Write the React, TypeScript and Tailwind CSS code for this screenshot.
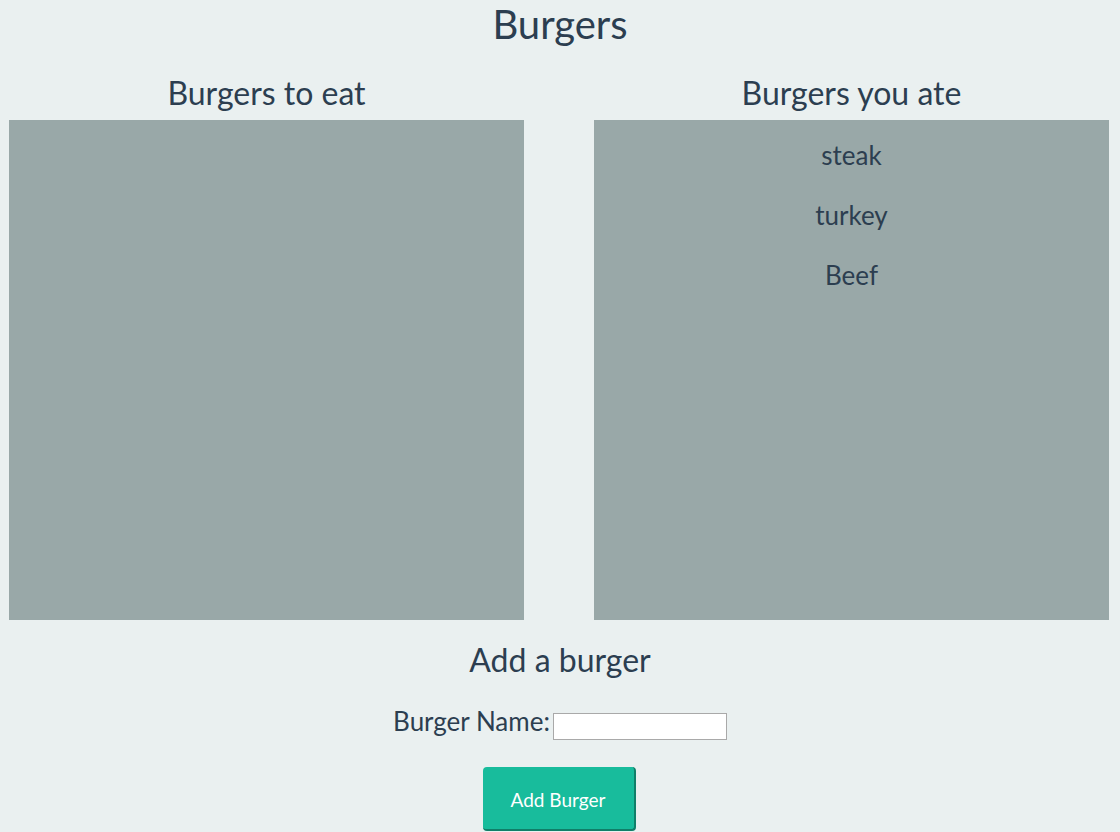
import React from 'react'

const eaten = ['steak', 'turkey', 'Beef']

function BurgerPanel({ title, items }: { title: string; items: string[] }) {
  return (
    <div className="flex w-[515px] flex-col items-center">
      <h2 className="h-[50px] text-[32px] leading-[46px]">{title}</h2>
      <ul className="flex h-[500px] w-full flex-col items-center bg-[#99a8a8] pt-[16px]">
        {items.map((item) => (
          <li key={item} className="h-[60px] text-[26px] leading-[38px]">
            {item}
          </li>
        ))}
      </ul>
    </div>
  )
}

export default function App() {
  return (
    <div
      className="flex min-h-[832px] flex-col items-center bg-[#eaf0f0] text-[#2c3e50]"
      style={{ fontFamily: 'Lato, "Open Sans", sans-serif' }}
    >
      <h1 className="h-[70px] text-[40px] leading-[48px]">Burgers</h1>
      <div className="flex w-full gap-[70px] px-[9px]">
        <BurgerPanel title="Burgers to eat" items={[]} />
        <BurgerPanel title="Burgers you ate" items={eaten} />
      </div>
      <h3 className="mt-[20px] text-[32px] leading-[40px]">Add a burger</h3>
      <form className="mt-[25px] flex flex-col items-center">
        <label className="flex items-start gap-[3px] text-[26px] leading-[32px]">
          Burger Name:
          <input
            type="text"
            className="mt-[8px] h-[27px] w-[174px] border border-[#a9a9a9] bg-white"
          />
        </label>
        <button
          type="button"
          className="mt-[27px] mr-[2px] h-[64px] w-[153px] rounded-[4px] border-r-2 border-b-2 border-[#107f69] bg-[#18bc9c] pt-[4px] text-[19px] text-white"
        >
          Add Burger
        </button>
      </form>
    </div>
  )
}
